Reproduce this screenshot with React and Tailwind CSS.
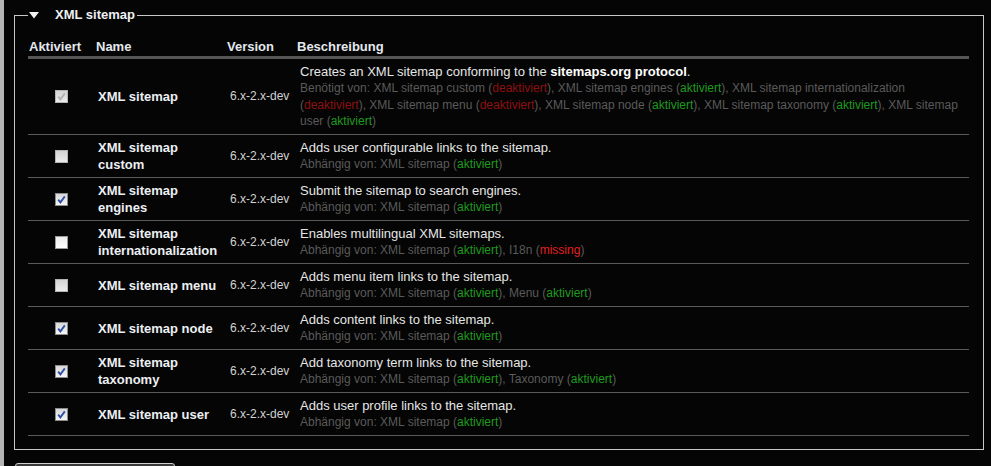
import React from "react";

const font = { fontFamily: '"Liberation Sans", Arial, sans-serif' };

const On = ({ children }) => <span className="text-[#1f9a1f]">{children}</span>;
const Off = ({ children }) => <span className="text-[#8e1010]">{children}</span>;
const Missing = ({ children }) => <span className="text-[#e41f1f]">{children}</span>;

const modules = [
  {
    name: "XML sitemap",
    state: "disabledChecked",
    long: true,
    desc: (
      <>
        Creates an XML sitemap conforming to the <b className="text-white">sitemaps.org protocol</b>.
      </>
    ),
    deps: (
      <span className="whitespace-nowrap">
        Benötigt von: XML sitemap custom (<Off>deaktiviert</Off>), XML sitemap engines (<On>aktiviert</On>), XML sitemap internationalization
        <br />(<Off>deaktiviert</Off>), XML sitemap menu (<Off>deaktiviert</Off>), XML sitemap node (<On>aktiviert</On>), XML sitemap taxonomy (<On>aktiviert</On>), XML sitemap
        <br />user (<On>aktiviert</On>)
      </span>
    ),
  },
  {
    name: "XML sitemap custom",
    state: "disabled",
    desc: "Adds user configurable links to the sitemap.",
    deps: <>Abhängig von: XML sitemap (<On>aktiviert</On>)</>,
  },
  {
    name: "XML sitemap engines",
    state: "checked",
    desc: "Submit the sitemap to search engines.",
    deps: <>Abhängig von: XML sitemap (<On>aktiviert</On>)</>,
  },
  {
    name: "XML sitemap internationalization",
    state: "unchecked",
    desc: "Enables multilingual XML sitemaps.",
    deps: (
      <>
        Abhängig von: XML sitemap (<On>aktiviert</On>), I18n (<Missing>missing</Missing>)
      </>
    ),
  },
  {
    name: "XML sitemap menu",
    state: "disabled",
    desc: "Adds menu item links to the sitemap.",
    deps: (
      <>
        Abhängig von: XML sitemap (<On>aktiviert</On>), Menu (<On>aktiviert</On>)
      </>
    ),
  },
  {
    name: "XML sitemap node",
    state: "checked",
    desc: "Adds content links to the sitemap.",
    deps: <>Abhängig von: XML sitemap (<On>aktiviert</On>)</>,
  },
  {
    name: "XML sitemap taxonomy",
    state: "checked",
    desc: "Add taxonomy term links to the sitemap.",
    deps: (
      <>
        Abhängig von: XML sitemap (<On>aktiviert</On>), Taxonomy (<On>aktiviert</On>)
      </>
    ),
  },
  {
    name: "XML sitemap user",
    state: "checked",
    desc: "Adds user profile links to the sitemap.",
    deps: <>Abhängig von: XML sitemap (<On>aktiviert</On>)</>,
  },
];

const Checkbox = ({ state }) => {
  const disabled = state === "disabled" || state === "disabledChecked";
  const checked = state === "checked" || state === "disabledChecked";
  const box = disabled
    ? "border-[#b4b4b4] bg-gradient-to-b from-[#d4d4d4] to-[#ececec]"
    : checked
    ? "border-[#8c8c8c] bg-gradient-to-b from-[#d8d8d8] to-[#f6f6f6]"
    : "border-[#9a9a9a] bg-gradient-to-b from-[#ececec] to-white";
  return (
    <span className={`flex h-[13px] w-[13px] items-center justify-center border ${box}`}>
      {checked && (
        <svg width="11" height="11" viewBox="0 0 11 11">
          <path
            d="M2.2 5.6 L4.4 8.4 L8.8 2.4"
            fill="none"
            stroke={disabled ? "#b2b2b2" : "#2f4fa6"}
            strokeWidth="1.8"
          />
        </svg>
      )}
    </span>
  );
};

const cols = "grid grid-cols-[66px_132px_70px_1fr]";

export default function App() {
  return (
    <div className="flex h-[466px] w-full overflow-hidden bg-[#050505]" style={font}>
      <div className="w-[4px] shrink-0 bg-[#b4b4b4]" />
      <div className="flex-1 pl-[10px] pr-[7px]">
        <fieldset className="mt-[7px] h-[443px] border border-[#c8c8c8] pl-[13px] pr-[14px] pt-[13px]">
          <legend className="flex items-center pr-[2px] text-[13px] font-bold leading-[16px] text-[#eef0f4]">
            <svg width="10" height="7" viewBox="0 0 10 7" className="ml-[1px] mt-[1px]">
              <path d="M0 0 H10 L5 6.5 Z" fill="#f2f2f2" />
            </svg>
            <span className="ml-[16px]">XML sitemap</span>
          </legend>

          <div className={`${cols} h-[23px] border-b-[3px] border-[#565656] pb-[1px] text-[13px] font-bold leading-[16px] text-[#e4e8ee]`}>
            <div className="self-end pl-[1px]">Aktiviert</div>
            <div className="self-end pl-[2px]">Name</div>
            <div className="self-end pl-[1px]">Version</div>
            <div className="self-end pl-[1px]">Beschreibung</div>
          </div>

          {modules.map((m) => (
            <div key={m.name} className={`${cols} border-b border-[#5a5a5a] py-[4px]`}>
              <div className="flex items-center justify-center">
                <Checkbox state={m.state} />
              </div>
              <div className="flex items-center pl-[4px] text-[13px] font-bold leading-[17px] text-[#eceff3]">
                {m.name}
              </div>
              <div className="flex items-center pl-[4px] text-[12px] leading-[17px] text-[#d2d2d2]">
                6.x-2.x-dev
              </div>
              <div className="pl-[4px]">
                <div className="text-[13px] leading-[17px] text-[#e6e6e6]">{m.desc}</div>
                <div className={`text-[12px] text-[#5a5a5a] ${m.long ? "leading-[16.67px]" : "leading-[17px]"}`}>
                  {m.deps}
                </div>
              </div>
            </div>
          ))}
        </fieldset>
        <button
          aria-label="Konfiguration speichern"
          className="ml-[1px] mt-[13px] block h-[26px] w-[160px] rounded-[3px] border border-[#cfcfcf] bg-[#3a3a3a]"
        />
      </div>
    </div>
  );
}
